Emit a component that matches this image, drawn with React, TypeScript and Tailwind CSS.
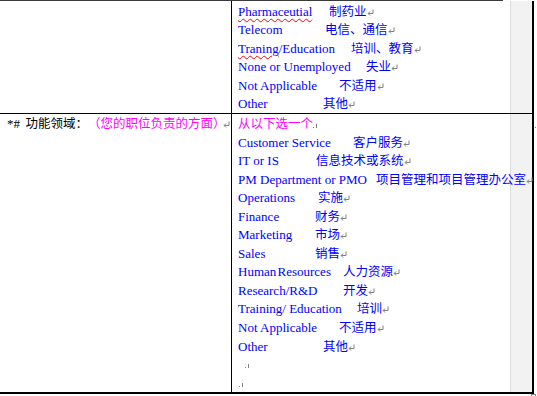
import React from "react";

const EN = "font-['Liberation_Serif',serif] text-[13px]";
const ZH = "font-['Noto_Sans_CJK_SC',sans-serif] text-[12.5px]";
const WAVY = "underline decoration-wavy decoration-[#ff0000] decoration-1 underline-offset-[2px]";

function Para({ className = "mb-[1px]" }: { className?: string }) {
  return (
    <svg width="7" height="7" viewBox="0 0 7 7" className={`shrink-0 ${className}`}>
      <path d="M6 0.5V4.5H1.2" stroke="#808080" strokeWidth="1" fill="none" />
      <path d="M3 2.5L1.2 4.5L3 6.5" stroke="#808080" strokeWidth="1" fill="none" />
    </svg>
  );
}

function CellMark({ className = "" }: { className?: string }) {
  return (
    <svg width="4" height="4" viewBox="0 0 4 4" className={`shrink-0 ${className}`} shapeRendering="crispEdges">
      <rect x="0" y="3" width="1" height="1" fill="#808080" />
      <rect x="3" y="0" width="1" height="4" fill="#808080" />
    </svg>
  );
}

type Row = { en: React.ReactNode; zh: string; w: string };

const rows1: Row[] = [
  { en: <span className={WAVY}>Pharmaceutial</span>, zh: "制药业", w: "w-[91px]" },
  { en: "Telecom", zh: "电信、通信", w: "w-[87px]" },
  {
    en: (
      <>
        <span className={WAVY}>Traning</span>/Education
      </>
    ),
    zh: "培训、教育",
    w: "w-[113px]",
  },
  { en: "None or Unemployed", zh: "失业", w: "w-[128px]" },
  { en: "Not Applicable", zh: "不适用", w: "w-[101px]" },
  { en: "Other", zh: "其他", w: "w-[85px]" },
];

const rows2: Row[] = [
  { en: "Customer Service", zh: "客户服务", w: "w-[115px]" },
  { en: "IT or IS", zh: "信息技术或系统", w: "w-[78px]" },
  { en: "PM Department or PMO", zh: "项目管理和项目管理办公室", w: "w-[138px]" },
  { en: "Operations", zh: "实施", w: "w-[80px]" },
  { en: "Finance", zh: "财务", w: "w-[77px]" },
  { en: "Marketing", zh: "市场", w: "w-[77px]" },
  { en: "Sales", zh: "销售", w: "w-[77px]" },
  { en: <span className="[word-spacing:-2px]">Human Resources</span>, zh: "人力资源", w: "w-[105px]" },
  { en: "Research/R&D", zh: "开发", w: "w-[105px]" },
  { en: "Training/ Education", zh: "培训", w: "w-[119px]" },
  { en: "Not Applicable", zh: "不适用", w: "w-[101px]" },
  { en: "Other", zh: "其他", w: "w-[85px]" },
];

function ItemRow({ row }: { row: Row }) {
  return (
    <div className="flex items-baseline h-[18.55px] leading-[18.55px] whitespace-nowrap text-[#0000ff]">
      <span className={`${row.w} shrink-0 ${EN}`}>{row.en}</span>
      <span className={ZH}>{row.zh}</span>
      <Para />
    </div>
  );
}

export default function App() {
  return (
    <div className="w-[537px] h-[396px] bg-white overflow-hidden">
      <div className="h-[1px] w-[503px] bg-[#3a3a3a]" />
      <div className="flex h-[112px]">
        <div className="w-[231px] shrink-0" />
        <div className="w-[1px] shrink-0 bg-black" />
        <div className="w-[278px] shrink-0 pl-[6px] flex flex-col justify-end relative z-10">
          {rows1.map((r, i) => (
            <ItemRow key={i} row={r} />
          ))}
        </div>
        <div className="w-[22px] shrink-0 bg-[#f2f2f2] border-l border-[#dcdcdc]" />
        <div className="w-[2px] shrink-0 bg-black" />
      </div>
      <div className="h-[1px] w-[534px] bg-black" />
      <div className="flex h-[278px]">
        <div className="w-[231px] shrink-0 pl-[7px]">
          <div className="flex items-baseline h-[18.55px] leading-[18.55px] whitespace-nowrap">
            <span className={`w-[18.5px] shrink-0 text-black ${EN}`}>*#</span>
            <span className={`text-black ${ZH}`}>功能领域：</span>
            <span className={`text-[#ff00ff] ${ZH}`}>（您的职位负责的方面）</span>
            <Para className="-ml-[3px] mb-[4px]" />
          </div>
        </div>
        <div className="w-[1px] shrink-0 bg-black" />
        <div className="w-[278px] shrink-0 pl-[6px] flex flex-col relative z-10">
          <div className="flex items-baseline h-[18.55px] leading-[18.55px] whitespace-nowrap">
            <span className={`text-[#ff00ff] ${ZH}`}>从以下选一个</span>
            <CellMark className="ml-[0px]" />
          </div>
          {rows2.map((r, i) => (
            <ItemRow key={i} row={r} />
          ))}
          <div className="flex items-baseline h-[18.55px] leading-[18.55px]">
            <span className={`${EN} w-0 overflow-hidden`}>&nbsp;</span>
            <CellMark className="ml-[7px] mb-[1px]" />
          </div>
          <div className="flex items-baseline h-[18.55px] leading-[18.55px]">
            <span className={`${EN} w-0 overflow-hidden`}>&nbsp;</span>
            <CellMark className="ml-[1px] mb-[1px]" />
          </div>
        </div>
        <div className="w-[22px] shrink-0 bg-[#f2f2f2] border-l border-[#dcdcdc]" />
        <div className="w-[2px] shrink-0 bg-black" />
        <div className="pl-[1px] pt-[13px]">
          <div className="w-[1px] h-[1px] bg-[#808080]" />
        </div>
      </div>
      <div className="h-[2px] w-[534px] bg-black" />
      <div className="flex pl-[531px]">
        <div className="w-[5px] h-[3px] border border-b-0 border-[#808080]" />
      </div>
    </div>
  );
}
